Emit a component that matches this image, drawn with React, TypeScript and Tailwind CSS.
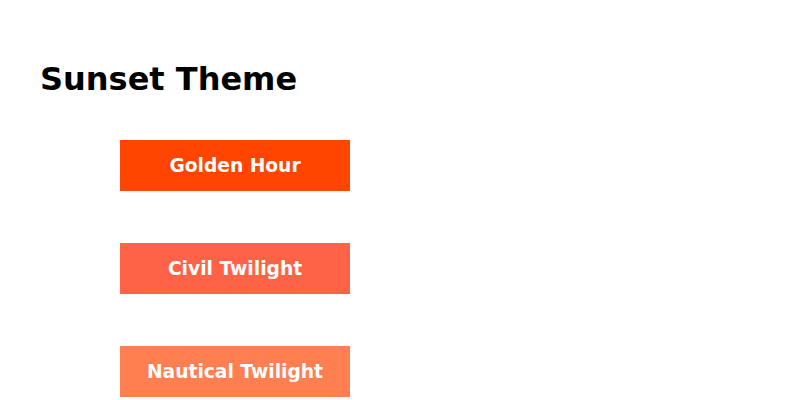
const buttons = [
  { label: 'Golden Hour', color: 'bg-[#ff4500]' },
  { label: 'Civil Twilight', color: 'bg-[#ff6347]' },
  { label: 'Nautical Twilight', color: 'bg-[#ff7f50]' },
];

export default function App() {
  return (
    <div className="min-h-[400px] w-[800px] bg-white px-10 pt-[61px] font-['DejaVu_Sans',sans-serif]">
      <h1 className="text-[32px] font-bold leading-[37px] text-black">Sunset Theme</h1>
      <div className="ml-20 mt-[42px] flex flex-col gap-[52px]">
        {buttons.map((b) => (
          <button
            key={b.label}
            className={`${b.color} flex h-[51px] w-[230px] items-center justify-center text-[18.67px] font-bold text-white`}
          >
            {b.label}
          </button>
        ))}
      </div>
    </div>
  );
}
